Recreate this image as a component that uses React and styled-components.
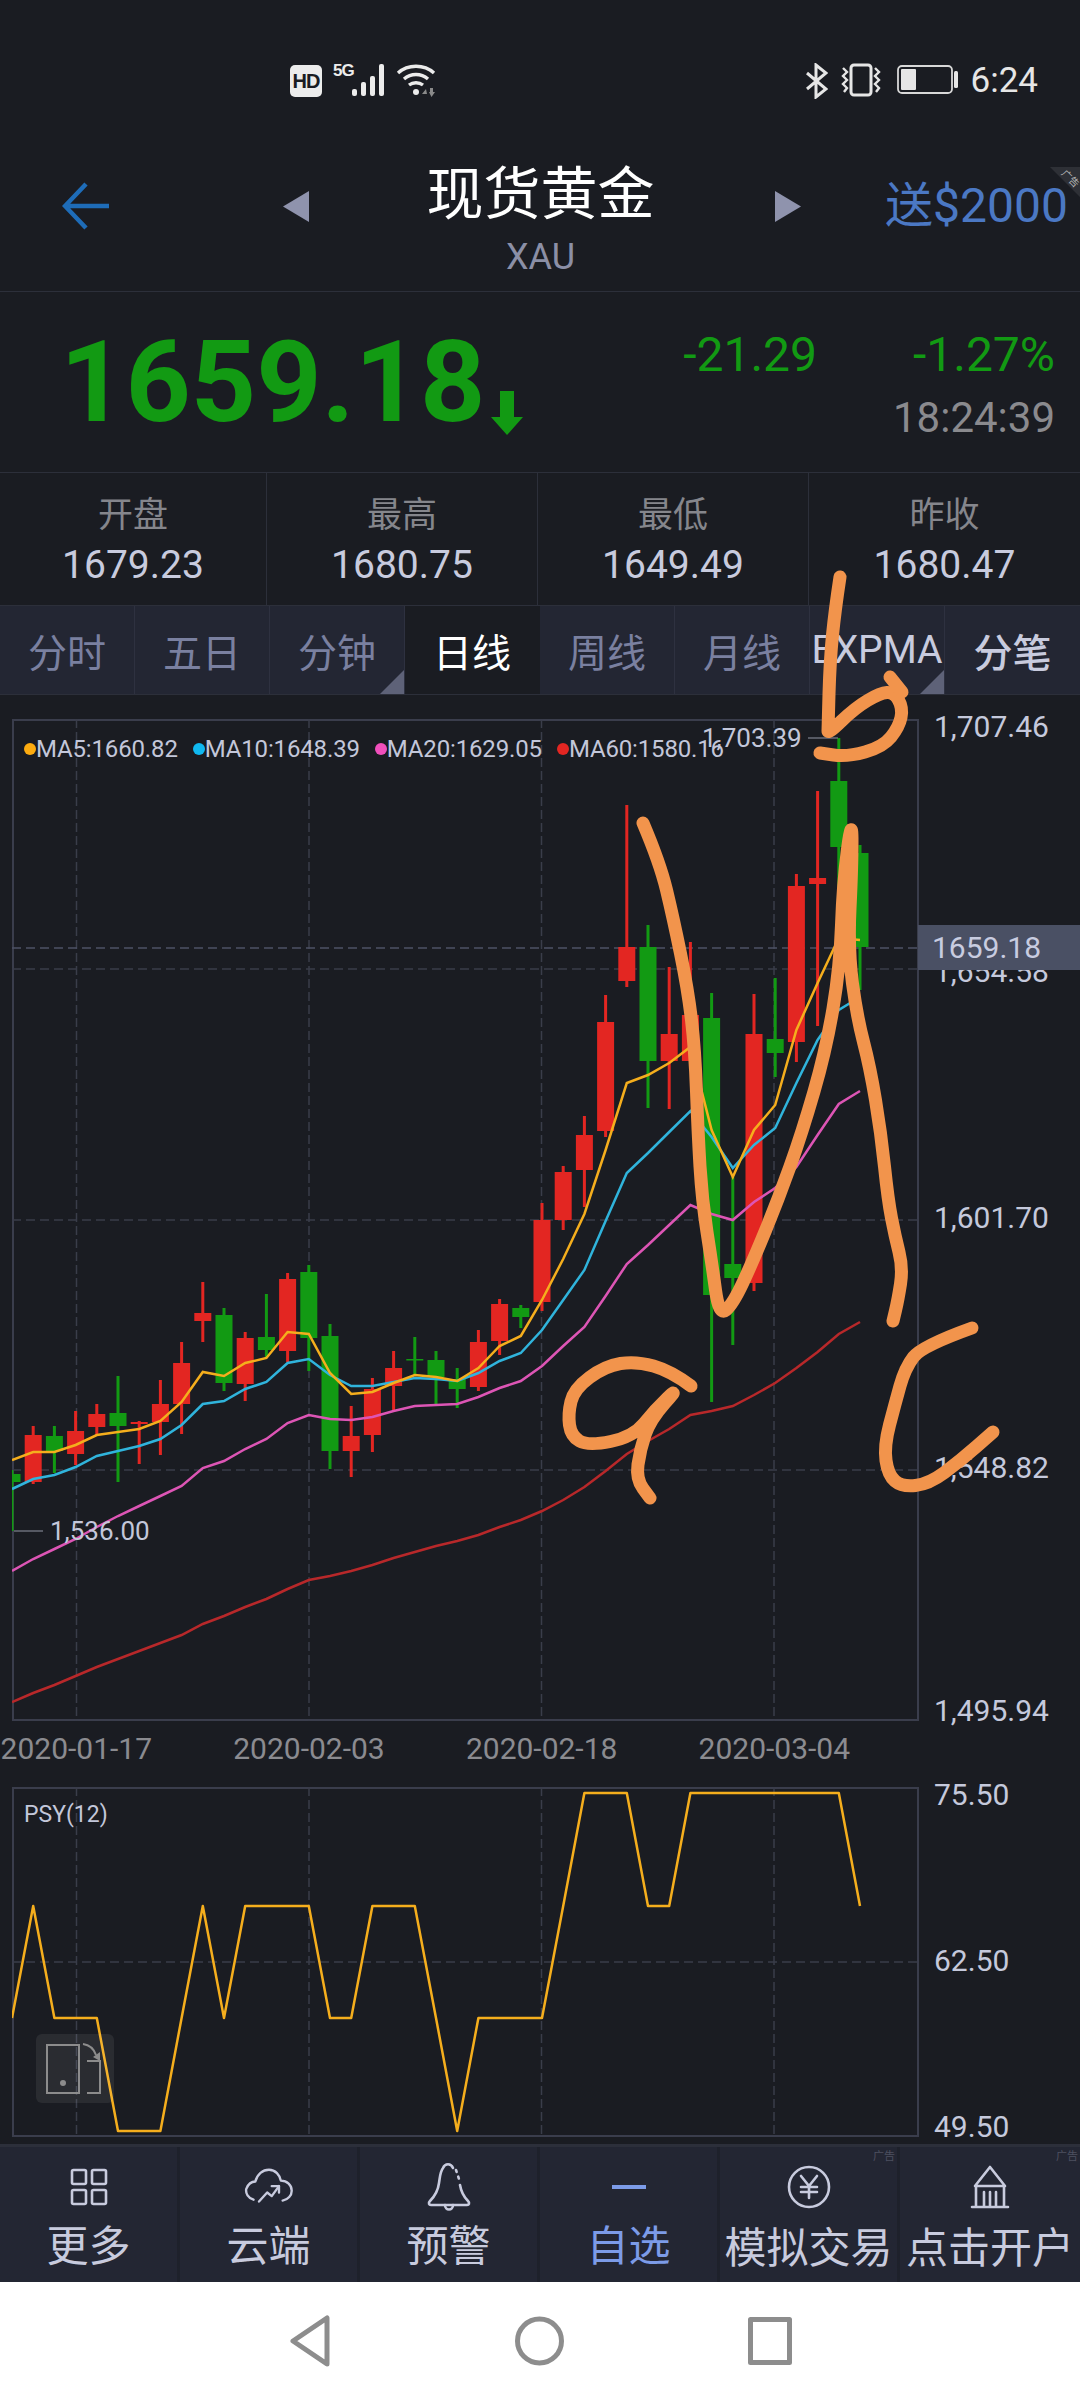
import React from "react";
import styled, { createGlobalStyle } from "styled-components";

const RED = "#e32622";
const GREEN = "#129a13";
const LINE = "#2c2f3a";

const GlobalStyle = createGlobalStyle`
  html, body {
    margin: 0;
    padding: 0;
    background: #1a1c22;
  }
  * {
    box-sizing: border-box;
  }
`;

const Page = styled.div`
  position: relative;
  width: 1080px;
  height: 2400px;
  overflow: hidden;
  background: #1a1c22;
  font-family: Roboto, "Noto Sans CJK SC", sans-serif;
  display: flex;
  flex-direction: column;
`;

/* status bar */
const StatusBar = styled.div`
  height: 130px;
  flex: none;
  padding: 63px 42px 0 290px;
  display: flex;
  justify-content: space-between;
  align-items: flex-start;
`;

const StatusGroup = styled.div`
  display: flex;
  align-items: flex-start;
`;

const HdBadge = styled.span`
  width: 32px;
  height: 32px;
  margin-top: 2px;
  border-radius: 5px;
  background: #ececec;
  color: #1a1c22;
  font: 700 20px/32px "Liberation Sans", sans-serif;
  letter-spacing: -1px;
  text-align: center;
`;

const FiveG = styled.span`
  margin-left: 11px;
  color: #ececec;
  font: 700 17px/15px "Liberation Sans", sans-serif;
  letter-spacing: -1px;
  width: 19px;
`;

const Clock = styled.span`
  margin: 2px 0 0 12px;
  color: #e6e6e6;
  font-size: 35px;
  line-height: 32px;
`;

/* header */
const Header = styled.div`
  position: relative;
  height: 162px;
  flex: none;
  padding-bottom: 9px;
  border-bottom: 1px solid ${LINE};
  display: grid;
  grid-template-columns: 283px 26px 1fr 26px 279px;
  align-items: center;
`;

const BackCell = styled.div`
  padding-left: 62px;
  display: flex;
`;

const TitleStack = styled.div`
  align-self: start;
  padding: 35px 3px 0 0;
  text-align: center;
`;

const Title = styled.div`
  color: #fff;
  font-size: 57px;
  line-height: 60px;
`;

const Code = styled.div`
  margin-top: 14px;
  color: #8b8fa6;
  font-size: 36px;
  line-height: 36px;
`;

const Promo = styled.div`
  margin-left: 84px;
  color: #4b78c4;
  font-size: 48px;
  line-height: 56px;
  white-space: nowrap;
`;

const AdCorner = styled.div`
  position: absolute;
  top: 37px;
  right: 0;
  width: 30px;
  height: 30px;
  background: #2e3036;
  clip-path: polygon(0 0, 100% 0, 100% 100%);
  overflow: hidden;
`;

const AdCornerText = styled.span`
  position: absolute;
  top: 7px;
  left: 10px;
  color: #b8b8b8;
  font-size: 10px;
  line-height: 10px;
  white-space: nowrap;
  transform: rotate(45deg);
`;

/* quote */
const QuoteRow = styled.div`
  height: 181px;
  flex: none;
  padding: 31px 25px 0 60px;
  border-bottom: 1px solid ${LINE};
  display: flex;
  align-items: flex-start;
`;

const BigPrice = styled.div`
  margin-top: 3px;
  color: ${GREEN};
  font-size: 114px;
  font-weight: 700;
  line-height: 112px;
`;

const DownArrow = styled.svg`
  margin: 68px 0 0 5px;
`;

const Change = styled.div`
  margin: 4px 0 0 auto;
  color: ${GREEN};
  font-size: 48px;
  line-height: 56px;
`;

const QuoteSide = styled.div`
  margin-top: 4px;
  text-align: right;
  width: 238px;
`;

const QuoteTime = styled.div`
  margin-top: 7px;
  color: #8a8a8e;
  font-size: 42px;
  line-height: 56px;
`;

const ChangeValue = styled.div`
  color: ${GREEN};
  font-size: 48px;
  line-height: 56px;
`;

/* open / high / low / close */
const StatRow = styled.div`
  height: 132px;
  flex: none;
  display: grid;
  grid-template-columns: 267px 271px 271px 271px;
`;

const StatCell = styled.div`
  padding-top: 23px;
  border-right: 1px solid ${LINE};
  text-align: center;
  &:last-child {
    border-right: 0;
  }
`;

const StatLabel = styled.div`
  color: #85868c;
  font-size: 35px;
  line-height: 40px;
`;

const StatValue = styled.div`
  margin-top: 7px;
  color: #c8cbde;
  font-size: 39px;
  line-height: 44px;
`;

/* period tabs */
const Tabs = styled.div`
  height: 90px;
  flex: none;
  display: grid;
  grid-template-columns: repeat(8, 135px);
  border-top: 1px solid ${LINE};
  border-bottom: 1px solid ${LINE};
`;

const Tab = styled.div`
  position: relative;
  display: flex;
  align-items: center;
  justify-content: center;
  white-space: nowrap;
  font-size: 39px;
  font-weight: ${(p) => (p.$bold ? 500 : 400)};
  background: ${(p) => (p.$active ? "#1a1c22" : "#232633")};
  color: ${(p) => (p.$active ? "#fff" : p.$light ? "#c8cbde" : "#7a80a0")};
  border-right: 1px solid ${(p) => (p.$active ? "#1a1c22" : "#2e3140")};
  &:last-child {
    border-right: 0;
  }
`;

const TabCorner = styled.span`
  position: absolute;
  right: 0;
  bottom: 0;
  width: 24px;
  height: 24px;
  background: #5e6278;
  clip-path: polygon(100% 0, 100% 100%, 0 100%);
`;

/* charts */
const ChartRow = styled.div`
  flex: none;
  margin-top: ${(p) => p.$top || 0}px;
  padding-left: 12px;
  display: flex;
`;

const Frame = styled.div`
  position: relative;
  width: 907px;
  height: ${(p) => p.$height}px;
  svg {
    display: block;
  }
`;

const AxisColumn = styled.div`
  margin: -7px 0 -5px;
  padding-left: 15px;
  display: grid;
  grid-template-rows: ${(p) => p.$rows};
`;

const AxisLabel = styled.div`
  color: #c5c9dc;
  font-size: 30px;
  line-height: 30px;
`;

const PriceTag = styled.div`
  position: absolute;
  top: 925px;
  left: 918px;
  width: 162px;
  height: 45px;
  padding-left: 14px;
  background: #4a5064;
  color: #c8cce0;
  font-size: 30px;
  line-height: 46px;
`;

const Legend = styled.div`
  position: absolute;
  top: 18px;
  left: 12px;
  display: flex;
  color: #c3c7da;
  font-size: 24px;
  letter-spacing: -0.15px;
  line-height: 24px;
  white-space: nowrap;
`;

const LegendItem = styled.div`
  display: flex;
  align-items: center;
  margin-right: 15px;
  &::before {
    content: "";
    width: 12px;
    height: 12px;
    border-radius: 50%;
    background: ${(p) => p.$color};
  }
`;

const PeakLabel = styled.div`
  position: absolute;
  top: ${(p) => p.$top}px;
  left: ${(p) => p.$left}px;
  color: #c3c7da;
  font-size: 26px;
  line-height: 30px;
  white-space: nowrap;
`;

const DateRow = styled.div`
  height: 66px;
  flex: none;
  margin-left: -40px;
  padding-top: 13px;
  display: grid;
  grid-template-columns: repeat(4, 232.67px);
`;

const DateLabel = styled.div`
  color: #8b8b90;
  font-size: 30px;
  line-height: 30px;
  text-align: center;
`;

const PsyLabel = styled.div`
  position: absolute;
  top: 14px;
  left: 12px;
  color: #c3c7da;
  font-size: 23px;
  line-height: 28px;
`;

const RotateHint = styled.div`
  position: absolute;
  left: 24px;
  top: 247px;
  width: 78px;
  height: 69px;
  border-radius: 6px;
  background: rgba(255, 255, 255, 0.07);
  display: flex;
  align-items: center;
  justify-content: center;
`;

/* bottom menu */
const BottomNav = styled.div`
  height: 138px;
  flex: none;
  margin-top: 7px;
  border-top: 3px solid ${LINE};
  background: #232633;
  display: grid;
  grid-template-columns: repeat(6, 180px);
`;

const NavItem = styled.div`
  position: relative;
  padding-top: 10px;
  border-right: 3px solid #1e212b;
  text-align: center;
  color: ${(p) => (p.$active ? "#7c9be8" : "#c8cbde")};
  &:last-child {
    border-right: 0;
  }
`;

const IconSlot = styled.div`
  height: 60px;
  display: flex;
  align-items: center;
  justify-content: center;
`;

const NavText = styled.div`
  margin-top: ${(p) => (p.$low ? 11 : 9)}px;
  font-size: 42px;
  line-height: 42px;
  white-space: nowrap;
`;

const AdTag = styled.span`
  position: absolute;
  top: 4px;
  right: 2px;
  color: #4d5060;
  font-size: 11px;
  line-height: 12px;
`;

/* android nav */
const SystemBar = styled.div`
  flex: 1;
  background: #fff;
  display: flex;
  align-items: center;
  justify-content: center;
  gap: 184px;
  padding-bottom: 1px;
`;

// [x index, red?, high, body top, body bottom, low] in page pixels
const candles = [
  [0, 0, 1470, 1474, 1482, 1531], [1, 1, 1426, 1435, 1482, 1484], [2, 0, 1426, 1436, 1451, 1473],
  [3, 1, 1411, 1431, 1454, 1465], [4, 1, 1404, 1414, 1427, 1435], [5, 0, 1376, 1413, 1426, 1482],
  [6, 1, 1421, 1422, 1424, 1464], [7, 1, 1380, 1404, 1422, 1455], [8, 1, 1342, 1363, 1404, 1434],
  [9, 1, 1282, 1313, 1321, 1342], [10, 0, 1308, 1315, 1383, 1391], [11, 1, 1332, 1338, 1384, 1401],
  [12, 0, 1294, 1337, 1350, 1357], [13, 1, 1273, 1279, 1351, 1362], [14, 0, 1265, 1272, 1338, 1371],
  [15, 0, 1324, 1336, 1451, 1469], [16, 1, 1406, 1436, 1451, 1477], [17, 1, 1378, 1389, 1435, 1452],
  [18, 1, 1351, 1368, 1386, 1411], [19, 0, 1337, 1359, 1360, 1375], [20, 0, 1351, 1360, 1377, 1406],
  [21, 0, 1368, 1379, 1389, 1408], [22, 1, 1330, 1342, 1387, 1391], [23, 1, 1299, 1304, 1341, 1355],
  [24, 0, 1305, 1308, 1317, 1328], [25, 1, 1203, 1220, 1302, 1311], [26, 1, 1166, 1172, 1220, 1230],
  [27, 1, 1116, 1135, 1170, 1207], [28, 1, 995, 1022, 1131, 1137], [29, 1, 805, 947, 981, 987],
  [30, 0, 925, 947, 1061, 1108], [31, 1, 967, 1034, 1061, 1109], [32, 1, 942, 1015, 1061, 1061],
  [33, 0, 993, 1018, 1295, 1402], [34, 0, 1177, 1264, 1278, 1345], [35, 1, 994, 1034, 1283, 1291],
  [36, 0, 978, 1039, 1053, 1077], [37, 1, 874, 886, 1042, 1062], [38, 1, 791, 878, 884, 1026],
  [39, 0, 738, 781, 847, 940], [40, 0, 845, 853, 947, 990],
];

const ma5 = [1460, 1452, 1452, 1445, 1435, 1432, 1429, 1421, 1402, 1372, 1376, 1363, 1358, 1332, 1334, 1373, 1394, 1392, 1383, 1375, 1377, 1381, 1368, 1346, 1336, 1300, 1259, 1214, 1150, 1083, 1075, 1063, 1047, 1130, 1177, 1130, 1105, 1030, 983, 938, 940];
const ma10 = [1489, 1479, 1475, 1467, 1456, 1451, 1446, 1439, 1425, 1404, 1401, 1389, 1382, 1363, 1359, 1375, 1386, 1386, 1382, 1378, 1379, 1381, 1373, 1361, 1353, 1330, 1300, 1270, 1221, 1173, 1153, 1132, 1111, 1137, 1168, 1145, 1128, 1083, 1040, 1010, 997];
const ma20 = [1571, 1559, 1549, 1539, 1527, 1516, 1506, 1496, 1486, 1468, 1461, 1449, 1439, 1423, 1415, 1419, 1420, 1417, 1411, 1406, 1405, 1404, 1397, 1388, 1381, 1366, 1346, 1327, 1296, 1264, 1245, 1225, 1205, 1214, 1220, 1202, 1188, 1167, 1135, 1104, 1091];
const ma60 = [1702, 1693, 1685, 1676, 1667, 1659, 1651, 1643, 1635, 1624, 1616, 1607, 1599, 1589, 1580, 1576, 1571, 1565, 1558, 1552, 1546, 1541, 1535, 1527, 1520, 1511, 1500, 1487, 1471, 1454, 1441, 1429, 1415, 1411, 1406, 1395, 1383, 1368, 1352, 1334, 1322];

const H = 1793;
const M = 1906;
const L = 2018;
const B = 2131;
const psy = [L, M, L, L, L, B, B, B, L, M, L, M, M, M, M, L, L, M, M, M, 2018, B, L, L, L, L, M, H, H, H, M, M, H, H, H, H, H, H, H, H, M];

const gridX = [76.5, 309, 541.5, 774];

const candleX = (i) => 12 + 21.2 * i;
const linePoints = (values) => values.map((y, i) => `${candleX(i).toFixed(1)},${y}`).join(" ");

// smooth a hand drawn stroke through midpoints
const smooth = (pts) => {
  let d = `M${pts[0][0]} ${pts[0][1]}`;
  for (let i = 1; i < pts.length - 1; i++) {
    const mx = (pts[i][0] + pts[i + 1][0]) / 2;
    const my = (pts[i][1] + pts[i + 1][1]) / 2;
    d += ` Q${pts[i][0]} ${pts[i][1]} ${mx} ${my}`;
  }
  const last = pts[pts.length - 1];
  return `${d} L${last[0]} ${last[1]}`;
};

const strokes = [
  // the b
  [[840, 577], [835, 610], [830, 660], [828, 728], [828, 734], [855, 708], [880, 693], [894, 692], [903, 708], [899, 727], [883, 747], [847, 757], [820, 753]],
  [[890, 677], [902, 692]],
  // the long zigzag
  [[643, 823], [660, 863], [673, 917], [688, 990], [695, 1050], [698, 1133], [702, 1200], [712, 1264], [719, 1316], [733, 1304], [753, 1261], [778, 1200], [802, 1133], [826, 1050], [840, 967], [843, 883], [852, 815], [852, 867], [848, 950], [857, 1017], [870, 1067], [881, 1133], [888, 1200], [895, 1236], [903, 1268], [898, 1300], [893, 1321]],
  // the a
  [[691, 1386], [671, 1371], [636, 1361], [605, 1366], [574, 1389], [568, 1414], [571, 1436], [588, 1446], [633, 1437], [655, 1410], [680, 1386], [650, 1420], [640, 1450], [636, 1479], [650, 1498]],
  // the c
  [[972, 1328], [922, 1346], [905, 1368], [895, 1404], [884, 1446], [888, 1475], [902, 1487], [929, 1484], [960, 1461], [993, 1432]],
];

const MainChart = () => (
  <svg width="907" height="1002" viewBox="12 719 907 1002">
    <rect x="13" y="720" width="905" height="1000" fill="none" stroke="#3a3d4c" strokeWidth="2" />
    {gridX.map((x) => (
      <line key={x} x1={x} x2={x} y1="719" y2="1721" stroke="#3a3d4a" strokeWidth="1.5" strokeDasharray="9 4" />
    ))}
    {[969, 1220, 1470].map((y) => (
      <line key={y} x1="12" x2="919" y1={y} y2={y} stroke="#3a3d4a" strokeWidth="1.5" strokeDasharray="9 5" />
    ))}
    <line x1="12" x2="919" y1="948" y2="948" stroke="#4d5166" strokeWidth="1.5" strokeDasharray="9 5" />
    {candles.map(([i, red, high, top, bottom, low]) => {
      const x = candleX(i);
      const color = red ? RED : GREEN;
      return (
        <g key={i} fill={color}>
          <rect x={x - 1.5} y={high} width="3" height={low - high} />
          <rect x={x - 8.5} y={top} width="17" height={Math.max(bottom - top, 1.5)} />
        </g>
      );
    })}
    <polyline points={linePoints(ma60)} fill="none" stroke="#b8282a" strokeWidth="2.5" />
    <polyline points={linePoints(ma20)} fill="none" stroke="#dd55b5" strokeWidth="2.5" />
    <polyline points={linePoints(ma10)} fill="none" stroke="#30b4dc" strokeWidth="2.5" />
    <polyline points={linePoints(ma5)} fill="none" stroke="#f5ae1d" strokeWidth="2.5" />
    <line x1="808" x2="838" y1="738" y2="738" stroke="#6b6e7a" strokeWidth="1.5" />
    <line x1="14" x2="43" y1="1531" y2="1531" stroke="#6b6e7a" strokeWidth="1.5" />
  </svg>
);

const PsyChart = () => (
  <svg width="907" height="350" viewBox="12 1787 907 350">
    <rect x="13" y="1788" width="905" height="348" fill="none" stroke="#3a3d4c" strokeWidth="2" />
    {gridX.map((x) => (
      <line key={x} x1={x} x2={x} y1="1787" y2="2137" stroke="#3a3d4a" strokeWidth="1.5" strokeDasharray="9 4" />
    ))}
    <line x1="12" x2="919" y1="1962" y2="1962" stroke="#3a3d4a" strokeWidth="1.5" strokeDasharray="9 5" />
    <polyline points={linePoints(psy)} fill="none" stroke="#f5ae1d" strokeWidth="2.5" strokeLinejoin="round" />
  </svg>
);

const HandDrawing = styled.svg`
  position: absolute;
  top: 0;
  left: 0;
  pointer-events: none;
`;

const iconStroke = {
  fill: "none",
  stroke: "currentColor",
  strokeWidth: 2.6,
  strokeLinecap: "round",
  strokeLinejoin: "round",
};

const GridIcon = () => (
  <svg width="38" height="38" viewBox="0 0 38 38" {...iconStroke}>
    <rect x="2" y="2" width="14" height="14" rx="1.5" />
    <rect x="22" y="2" width="14" height="14" rx="1.5" />
    <rect x="2" y="22" width="14" height="14" rx="1.5" />
    <rect x="22" y="22" width="14" height="14" rx="1.5" />
  </svg>
);

const CloudIcon = () => (
  <svg width="52" height="40" viewBox="0 0 56 44" {...iconStroke}>
    <path d="M11 36 C5 34 2 29 3 24 C5 19 9 16 13 16 C15 8 21 3 28 3 C35 3 40 9 41 15 C48 15 53 20 53 26 C53 31 49 36 43 37" />
    <path d="M17 38 L26 28 L31 32 L39 21" />
    <path d="M31 21 H39 V28" />
  </svg>
);

const BellIcon = () => (
  <svg width="46" height="52" viewBox="0 0 46 52" {...iconStroke}>
    <path d="M27 7 C25 2 19 2 17 7 C14 11 14 16 13 22 C12 30 9 35 4 40 C2 42 3 44 5 44 H41 C43 44 44 42 42 40 C37 35 35 30 34 24" />
    <path d="M30 9 L33 18" strokeDasharray="2 5" />
    <path d="M19 44 C19 50 27 50 27 44" />
  </svg>
);

const MinusIcon = () => (
  <svg width="36" height="6" viewBox="0 0 36 6">
    <rect x="1" y="1" width="34" height="4" fill="currentColor" />
  </svg>
);

const YenIcon = () => (
  <svg width="44" height="44" viewBox="0 0 44 44" {...iconStroke}>
    <circle cx="22" cy="22" r="20" />
    <path d="M14 11 L22 21 L30 11 M22 21 V33 M14 22 H30 M14 27 H30" />
  </svg>
);

const BankIcon = () => (
  <svg width="44" height="44" viewBox="0 0 44 44" {...iconStroke}>
    <path d="M22 2 L37 21 H7 Z" />
    <path d="M8 21 V41 M36 21 V41 M16 27 V41 M22 27 V41 M28 27 V41 M4 42 H40" />
  </svg>
);

const menu = [
  { label: "更多", icon: <GridIcon /> },
  { label: "云端", icon: <CloudIcon /> },
  { label: "预警", icon: <BellIcon /> },
  { label: "自选", icon: <MinusIcon />, active: true },
  { label: "模拟交易", icon: <YenIcon />, ad: true },
  { label: "点击开户", icon: <BankIcon />, ad: true },
];

const stats = [
  ["开盘", "1679.23"],
  ["最高", "1680.75"],
  ["最低", "1649.49"],
  ["昨收", "1680.47"],
];

const tabs = [
  { label: "分时" },
  { label: "五日" },
  { label: "分钟", corner: true },
  { label: "日线", active: true },
  { label: "周线" },
  { label: "月线" },
  { label: "EXPMA", corner: true, light: true },
  { label: "分笔", light: true, bold: true },
];

const legend = [
  { text: "MA5:1660.82", color: "#fcab10" },
  { text: "MA10:1648.39", color: "#10b8f0" },
  { text: "MA20:1629.05", color: "#f04fbc" },
  { text: "MA60:1580.16", color: "#e32622" },
];

const App = () => {
  return (
    <Page>
      <GlobalStyle />
      <StatusBar>
        <StatusGroup>
          <HdBadge>HD</HdBadge>
          <FiveG>5G</FiveG>
          <svg width="36" height="34" viewBox="0 0 36 34" fill="#ececec">
            <rect x="0" y="26" width="5" height="7" rx="2" />
            <rect x="9" y="19" width="5" height="14" rx="2" />
            <rect x="18" y="13" width="5" height="20" rx="2" />
            <rect x="27" y="1" width="5" height="32" rx="2" />
          </svg>
          <svg width="42" height="34" viewBox="0 0 42 34" fill="none" stroke="#ececec" strokeWidth="3.4" style={{ marginLeft: 8 }}>
            <path d="M2 10 C12 1 28 1 38 10" />
            <path d="M8 16 C15 10 25 10 32 16" />
            <path d="M13 22 C17 19 23 19 27 22" />
            <circle cx="20" cy="29" r="3" fill="#ececec" stroke="none" />
            <path d="M30 26 L26 31 H31 Z M34 25 H37 V29 H39 L35.5 34 L33 29 H34 Z" fill="#8a8a8a" stroke="none" />
          </svg>
        </StatusGroup>
        <StatusGroup>
          <svg width="22" height="36" viewBox="0 0 22 36" fill="none" stroke="#e6e6e6" strokeWidth="3">
            <path d="M1 10 L20 26 L10 34 V2 L20 10 L1 26" />
          </svg>
          <svg width="42" height="34" viewBox="0 0 42 34" fill="none" stroke="#e6e6e6" strokeWidth="3" style={{ marginLeft: 12 }}>
            <rect x="11" y="2" width="20" height="30" rx="3" />
            <path d="M3 5 L7 9 L3 13 L7 17 L3 21 L7 25 L4 29" strokeWidth="2.4" />
            <path d="M35 5 L39 9 L35 13 L39 17 L35 21 L39 25 L36 29" strokeWidth="2.4" />
          </svg>
          <svg width="62" height="30" viewBox="0 0 62 30" style={{ marginLeft: 15, marginTop: 2 }}>
            <rect x="1" y="1" width="54" height="27" rx="4" fill="none" stroke="#d8d8d8" strokeWidth="1.8" />
            <rect x="4" y="4" width="15" height="21" rx="1" fill="#e6e6e6" />
            <rect x="57" y="6" width="4" height="17" rx="1.5" fill="#e6e6e6" />
          </svg>
          <Clock>6:24</Clock>
        </StatusGroup>
      </StatusBar>

      <Header>
        <BackCell>
          <svg width="48" height="48" viewBox="0 0 48 48" fill="none" stroke="#1e6cb8" strokeWidth="4.5">
            <path d="M24 2 L3 24 L24 46 M3 24 H47" />
          </svg>
        </BackCell>
        <svg width="26" height="31" viewBox="0 0 26 31">
          <path d="M26 0 V31 L0 15.5 Z" fill="#8f93ad" />
        </svg>
        <TitleStack>
          <Title>现货黄金</Title>
          <Code>XAU</Code>
        </TitleStack>
        <svg width="26" height="31" viewBox="0 0 26 31">
          <path d="M0 0 V31 L26 15.5 Z" fill="#8f93ad" />
        </svg>
        <Promo>送$2000</Promo>
        <AdCorner>
          <AdCornerText>广告</AdCornerText>
        </AdCorner>
      </Header>

      <QuoteRow>
        <BigPrice>1659.18</BigPrice>
        <DownArrow width="32" height="44" viewBox="0 0 32 44">
          <path d="M9 0 H23 V26 H32 L16 44 L0 26 H9 Z" fill={GREEN} />
        </DownArrow>
        <Change>-21.29</Change>
        <QuoteSide>
          <ChangeValue>-1.27%</ChangeValue>
          <QuoteTime>18:24:39</QuoteTime>
        </QuoteSide>
      </QuoteRow>

      <StatRow>
        {stats.map(([label, value]) => (
          <StatCell key={label}>
            <StatLabel>{label}</StatLabel>
            <StatValue>{value}</StatValue>
          </StatCell>
        ))}
      </StatRow>

      <Tabs>
        {tabs.map((tab) => (
          <Tab key={tab.label} $active={tab.active} $light={tab.light} $bold={tab.bold}>
            {tab.label}
            {tab.corner && <TabCorner />}
          </Tab>
        ))}
      </Tabs>

      <ChartRow $top={24}>
        <Frame $height={1002}>
          <MainChart />
          <Legend>
            {legend.map((item) => (
              <LegendItem key={item.text} $color={item.color}>
                {item.text}
              </LegendItem>
            ))}
          </Legend>
          <PeakLabel $top={4} $left={690}>1,703.39</PeakLabel>
          <PeakLabel $top={797} $left={38}>1,536.00</PeakLabel>
        </Frame>
        <AxisColumn $rows="245px 246px 250px 243px 30px">
          <AxisLabel>1,707.46</AxisLabel>
          <AxisLabel>1,654.58</AxisLabel>
          <AxisLabel>1,601.70</AxisLabel>
          <AxisLabel>1,548.82</AxisLabel>
          <AxisLabel>1,495.94</AxisLabel>
        </AxisColumn>
      </ChartRow>

      <DateRow>
        {["2020-01-17", "2020-02-03", "2020-02-18", "2020-03-04"].map((date) => (
          <DateLabel key={date}>{date}</DateLabel>
        ))}
      </DateRow>

      <ChartRow>
        <Frame $height={350}>
          <PsyChart />
          <PsyLabel>PSY(12)</PsyLabel>
          <RotateHint>
            <svg width="60" height="52" viewBox="0 0 60 52" fill="none" stroke="#8c8c8c" strokeWidth="2">
              <rect x="2" y="2" width="32" height="48" />
              <circle cx="18" cy="40" r="3" fill="#8c8c8c" stroke="none" />
              <path d="M42 18 H55 V50 H42" />
              <path d="M38 1 C45 2 49 6 51 12" />
              <path d="M48 14 L55 9 V18 Z" fill="#8c8c8c" stroke="none" />
            </svg>
          </RotateHint>
        </Frame>
        <AxisColumn $rows="166px 166px 30px">
          <AxisLabel>75.50</AxisLabel>
          <AxisLabel>62.50</AxisLabel>
          <AxisLabel>49.50</AxisLabel>
        </AxisColumn>
      </ChartRow>

      <BottomNav>
        {menu.map((item) => (
          <NavItem key={item.label} $active={item.active}>
            {item.ad && <AdTag>广告</AdTag>}
            <IconSlot>{item.icon}</IconSlot>
            <NavText $low={item.ad}>{item.label}</NavText>
          </NavItem>
        ))}
      </BottomNav>

      <SystemBar>
        <svg width="42" height="52" viewBox="0 0 42 52" fill="none" stroke="#8d8d8d" strokeWidth="5" strokeLinejoin="round">
          <path d="M38 3 V49 L4 26 Z" />
        </svg>
        <svg width="49" height="50" viewBox="0 0 49 50" fill="none" stroke="#8d8d8d" strokeWidth="5">
          <circle cx="24.5" cy="25" r="22" />
        </svg>
        <svg width="44" height="48" viewBox="0 0 44 48" fill="none" stroke="#8d8d8d" strokeWidth="5" strokeLinejoin="round">
          <rect x="2.5" y="2.5" width="39" height="43" />
        </svg>
      </SystemBar>

      <PriceTag>1659.18</PriceTag>

      <HandDrawing width="1080" height="2400" viewBox="0 0 1080 2400">
        {strokes.map((pts, i) => (
          <path key={i} d={smooth(pts)} fill="none" stroke="#f2944c" strokeWidth="13" strokeLinecap="round" strokeLinejoin="round" />
        ))}
      </HandDrawing>
    </Page>
  );
};

export default App;
